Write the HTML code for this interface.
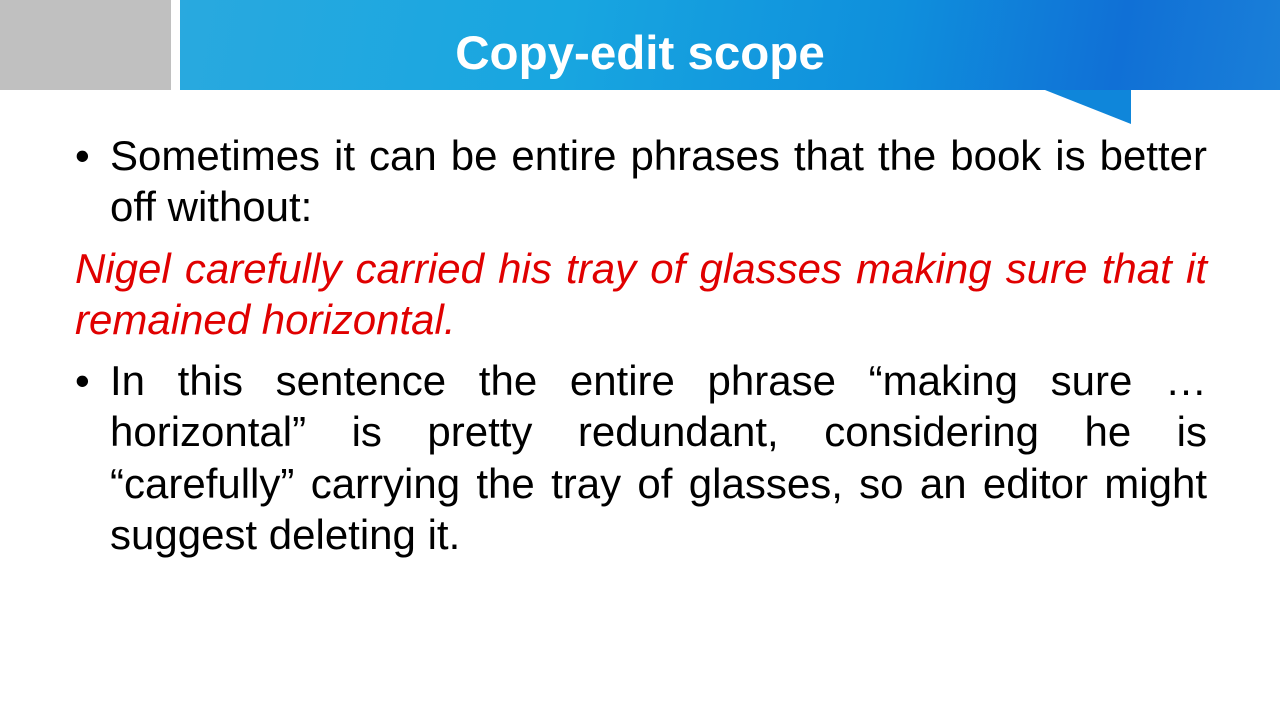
<!DOCTYPE html>
<html><head><meta charset="utf-8"><style>
body{margin:0;width:1280px;height:720px;background:#fff;position:relative;overflow:hidden;font-family:"Liberation Sans",Arial,sans-serif}
.gray{position:absolute;left:0;top:0;width:171px;height:90px;background:#c0c0c0}
.blue{position:absolute;left:180px;top:0;width:1100px;height:90px;background:linear-gradient(100deg,#29a9df 0%,#18a6e0 35%,#0f8fdc 65%,#1070d6 85%,#1a7fd8 100%)}
svg{position:absolute;left:0;top:0}
.title{position:absolute;top:27px;text-align:center;color:#fff;font-weight:bold;font-size:47.5px;line-height:54px}
.l{position:absolute;font-size:42px;line-height:51px;white-space:nowrap;color:#000}
.j{text-align:justify;text-align-last:justify;white-space:normal}
.red{color:#e00000;font-style:italic}
</style></head><body>
<div class="gray"></div>
<div class="blue"></div>
<svg width="1280" height="130"><polygon points="1045,90 1131,90 1131,124" fill="#0f86da"/></svg>
<div class="title" style="left:180px;width:920px">Copy-edit scope</div>
<div class="l" style="left:75px;top:130px">•</div>
<div class="l j" style="left:110px;top:130px;width:1097px">Sometimes it can be entire phrases that the book is better</div>
<div class="l" style="left:110px;top:181px">off without:</div>
<div class="l j red" style="left:75px;top:243px;width:1132px">Nigel carefully carried his tray of glasses making sure that it</div>
<div class="l red" style="left:75px;top:294px">remained horizontal.</div>
<div class="l" style="left:75px;top:355px">•</div>
<div class="l j" style="left:110px;top:355px;width:1097px">In this sentence the entire phrase “making sure …</div>
<div class="l j" style="left:110px;top:406px;width:1097px">horizontal” is pretty redundant, considering he is</div>
<div class="l j" style="left:110px;top:458px;width:1097px">“carefully” carrying the tray of glasses, so an editor might</div>
<div class="l" style="left:110px;top:509px">suggest deleting it.</div>
</body></html>
